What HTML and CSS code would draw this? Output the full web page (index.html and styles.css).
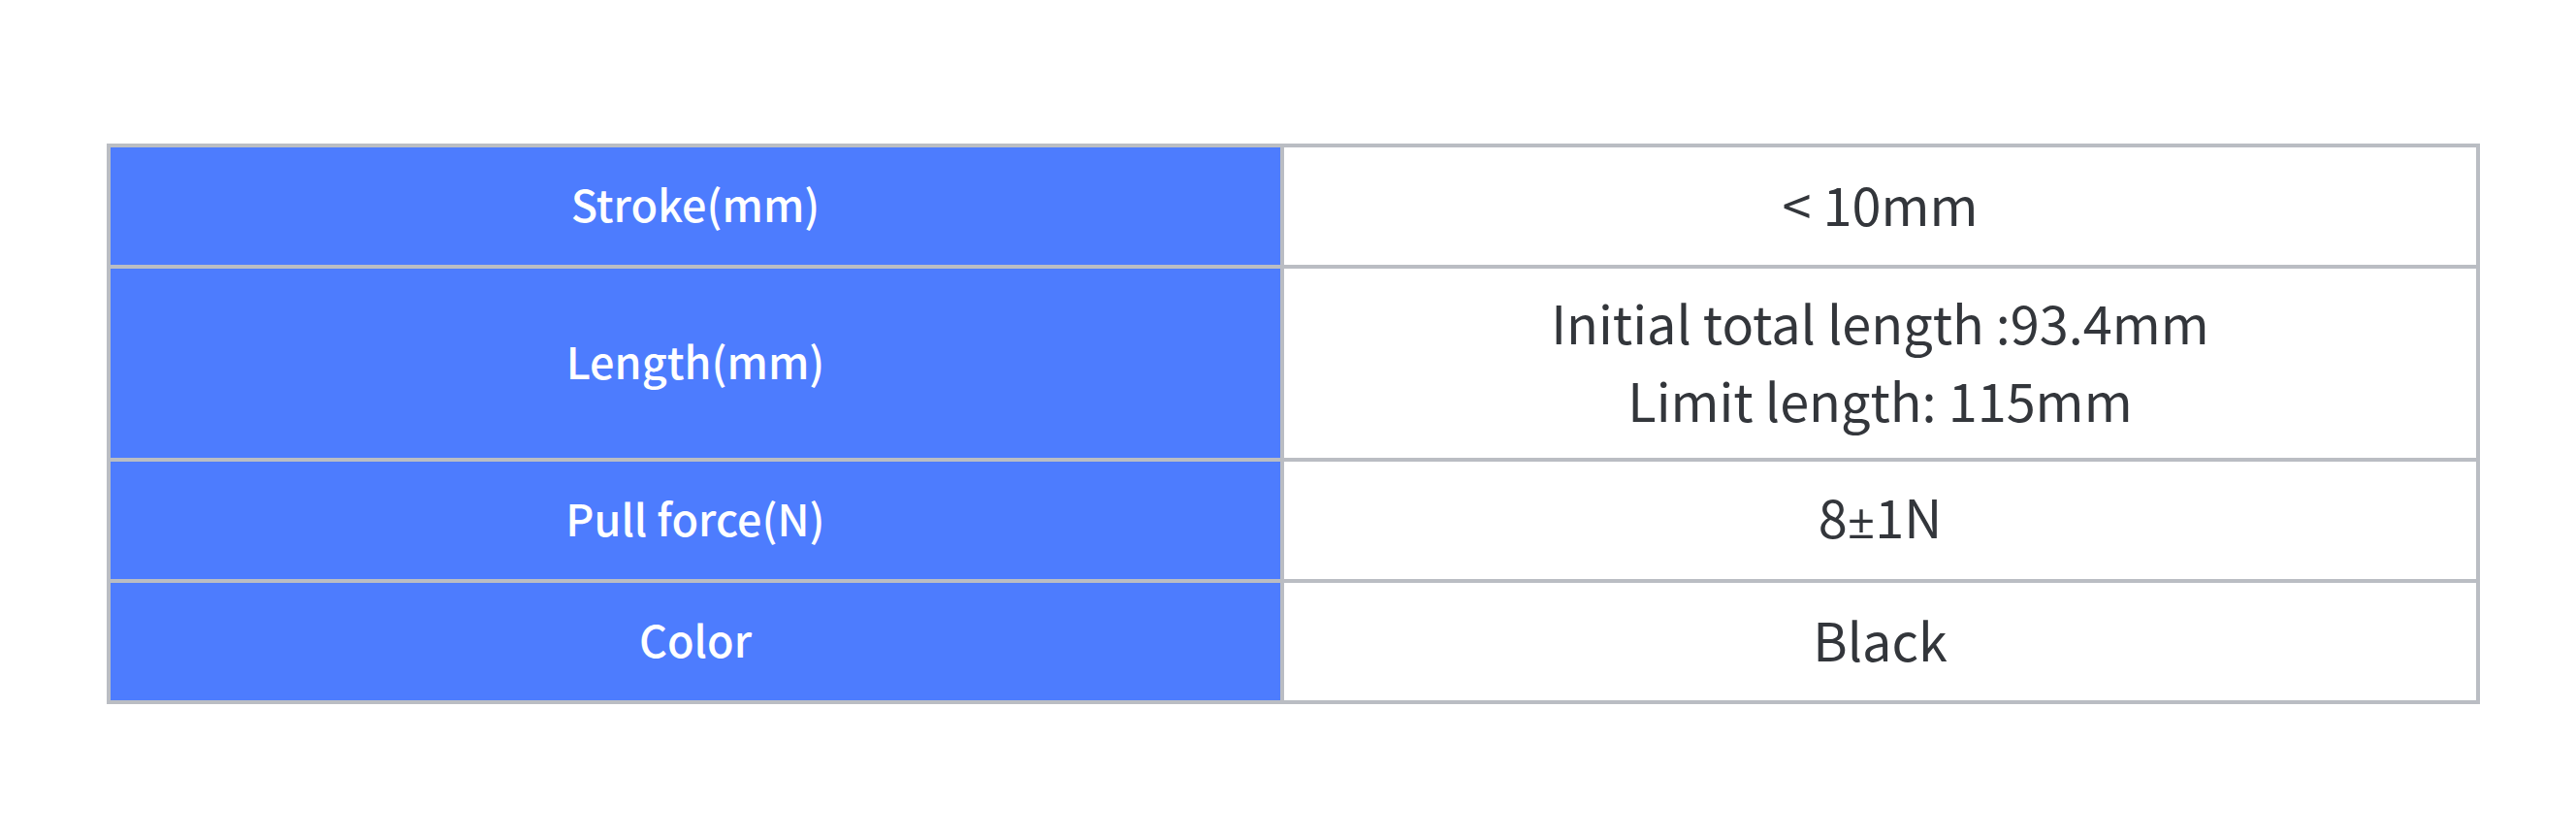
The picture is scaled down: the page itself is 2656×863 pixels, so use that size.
FILE: index.html
```html
<!DOCTYPE html>
<html lang="en">
<head>
  <meta charset="UTF-8">
  <title>Specifications</title>
  <link rel="stylesheet" href="styles.css">
</head>
<body>
  <table class="spec-table">
    <tr class="row-short">
      <th>Stroke(mm)</th>
      <td>&lt; 10mm</td>
    </tr>
    <tr class="row-tall">
      <th>Length(mm)</th>
      <td>Initial total length :93.4mm<br>Limit length: 115mm</td>
    </tr>
    <tr class="row-short">
      <th>Pull force(N)</th>
      <td>8<span class="sym">±</span>1N</td>
    </tr>
    <tr class="row-short">
      <th>Color</th>
      <td>Black</td>
    </tr>
  </table>
</body>
</html>
```

FILE: styles.css
```css
/* Base */
* {
  margin: 0;
  padding: 0;
  box-sizing: border-box;
}

body {
  background: #ffffff;
  font-family: "Noto Sans CJK SC", "Noto Sans", sans-serif;
  padding: 148px 99px 0 110px;
}

/* Spec table */
.spec-table {
  width: 100%;
  border-collapse: collapse;
  border: 4px solid #babdc3;
  table-layout: fixed;
}

.spec-table th,
.spec-table td {
  border: 4px solid #babdc3;
  text-align: center;
  vertical-align: middle;
  padding-bottom: 6px;
}

.spec-table th {
  width: 1210px;
  background-color: #4d7cfe;
  color: #ffffff;
  font-size: 45px;
  font-weight: 500;
}

.spec-table td {
  color: #33363b;
  font-size: 54px;
  font-weight: 400;
  line-height: 80px;
}

.sym {
  font-family: "Open Sans", "Noto Sans", sans-serif;
  font-size: 50px;
}

.row-short {
  height: 125px;
}

.row-tall {
  height: 199px;
}
```
